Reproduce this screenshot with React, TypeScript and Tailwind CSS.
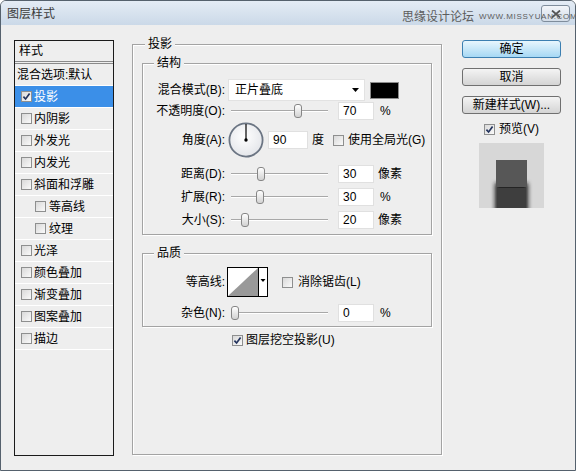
import React from "react";

type StyleItem = { label: string; checked?: boolean; active?: boolean; sub?: boolean };

const styleItems: StyleItem[] = [
  { label: "投影", checked: true, active: true },
  { label: "内阴影" },
  { label: "外发光" },
  { label: "内发光" },
  { label: "斜面和浮雕" },
  { label: "等高线", sub: true },
  { label: "纹理", sub: true },
  { label: "光泽" },
  { label: "颜色叠加" },
  { label: "渐变叠加" },
  { label: "图案叠加" },
  { label: "描边" },
];

function Check({ checked = false }: { checked?: boolean }) {
  return (
    <span className="inline-flex h-[11px] w-[11px] shrink-0 items-center justify-center border border-[#8e8f8f] bg-linear-to-br from-[#d9d9d9] to-[#fafafa]">
      {checked && (
        <svg width="9" height="9" viewBox="0 0 9 9">
          <path d="M1.4 4.6 L3.6 7 L7.6 1.6" fill="none" stroke="#24345e" strokeWidth="1.7" />
        </svg>
      )}
    </span>
  );
}

// track with a thumb; `at` is the thumb's left offset in px
function Slider({ at }: { at: number }) {
  return (
    <div className="relative ml-[6px] h-[14px] w-[97px] shrink-0">
      <div className="absolute left-0 right-0 top-[6px] h-[2px] border-t border-b border-t-[#a8a8a8] border-b-white" />
      <div
        className="absolute top-0 h-[14px] w-[8px] rounded-[3px] border border-[#868686] bg-linear-to-b from-white to-[#d2d2d2]"
        style={{ left: at }}
      />
    </div>
  );
}

function Field({ value, wide = false }: { value: string; wide?: boolean }) {
  return (
    <div
      className={`flex h-[18px] shrink-0 items-center border border-[#e0e0e0] bg-white pl-[4px] ${
        wide ? "w-[40px]" : "ml-[10px] w-[36px]"
      }`}
    >
      {value}
    </div>
  );
}

function Label({ children }: { children: React.ReactNode }) {
  return <span className="w-[82px] shrink-0 text-right">{children}</span>;
}

function Dial() {
  return (
    <svg width="36" height="36" viewBox="0 0 36 36" className="ml-[3px] shrink-0">
      <defs>
        <radialGradient id="dialFill" cx="45%" cy="40%" r="60%">
          <stop offset="0%" stopColor="#ffffff" />
          <stop offset="100%" stopColor="#e4e6ea" />
        </radialGradient>
      </defs>
      <circle cx="18" cy="18" r="16.6" fill="url(#dialFill)" stroke="#6b7583" strokeWidth="1.8" />
      <line x1="18" y1="18" x2="18" y2="2" stroke="#000" strokeWidth="1.2" />
      <circle cx="18" cy="18" r="1.7" fill="#000" />
    </svg>
  );
}

function Contour() {
  return (
    <svg width="41" height="30" viewBox="0 0 41 30" className="ml-[2px] shrink-0">
      <rect x="0.5" y="0.5" width="40" height="29" fill="#fff" stroke="#000" />
      <polygon points="1,29 31,1 31,29" fill="#999" />
      <line x1="31.5" y1="0" x2="31.5" y2="30" stroke="#000" />
      <polygon points="33.5,12 38.5,12 36,15" fill="#000" />
    </svg>
  );
}

function Button({ children, primary = false }: { children: React.ReactNode; primary?: boolean }) {
  return (
    <button
      type="button"
      className={
        primary
          ? "flex h-[18px] w-full items-center justify-center rounded-[3px] border border-[#3c7fb1] bg-linear-to-b from-[#e8f6fd] to-[#a6d8f4] leading-[14px]"
          : "flex h-[18px] w-full items-center justify-center rounded-[3px] border border-[#707070] bg-linear-to-b from-[#f4f4f4] to-[#d4d4d4] leading-[14px]"
      }
    >
      {children}
    </button>
  );
}

function Preview() {
  return (
    <svg width="65" height="65" viewBox="0 0 65 65">
      <defs>
        <filter id="soft" x="-50%" y="-50%" width="200%" height="200%">
          <feGaussianBlur stdDeviation="2.2" />
        </filter>
      </defs>
      <rect width="65" height="65" fill="#d7d7d7" />
      <rect x="16" y="40" width="33" height="40" fill="#222" filter="url(#soft)" />
      <rect x="18" y="45" width="29" height="25" fill="#3e3e3e" />
      <rect x="17" y="17" width="31" height="27" fill="#575757" />
    </svg>
  );
}

export default function App() {
  return (
    <div className="flex h-[471px] w-[576px] flex-col overflow-hidden rounded-t-[6px] border border-[#55616d] bg-[#eeeeee] font-['Liberation_Sans','Noto_Sans_CJK_SC',sans-serif] text-[12px] leading-[14px] text-black">
      {/* Title bar */}
      <div className="relative flex h-[24px] shrink-0 bg-linear-to-b from-[#e4ecf5] to-[#cbd9e8]">
        <span className="ml-[6px] mt-[6px] text-[12px] text-[#3b3b3b]">图层样式</span>
        <button
          type="button"
          className="ml-auto mr-[5px] mt-[4px] flex h-[17px] w-[29px] items-center justify-center rounded-[3px] border border-[#7f8d9c] bg-linear-to-b from-[#f2f5f9] to-[#d3dde8]"
        >
          <svg width="10" height="8" viewBox="0 0 10 8">
            <path d="M1 0.5 L9 7.5 M9 0.5 L1 7.5" stroke="#555" strokeWidth="1.8" />
          </svg>
        </button>
        {/* watermark sits over the close button */}
        <div className="absolute left-[401px] top-[9px] z-10 flex items-center gap-[5px] whitespace-nowrap text-[#5c5c5c]">
          <span className="shrink-0 text-[12px]">思缘设计论坛</span>
          <span className="shrink-0 text-[8px] leading-[10px] tracking-[0.7px]">WWW.MISSYUAN.COM</span>
        </div>
      </div>

      {/* Body */}
      <div className="flex pl-[13px]">
        {/* Styles list */}
        <div className="mt-[15px] flex h-[416px] w-[100px] shrink-0 flex-col border border-[#1a1a1a]">
          <div className="flex h-[23px] items-center border-b-[3px] border-double border-[#8a8a8a] pl-[4px]">样式</div>
          <div className="flex h-[22px] items-center border-b border-white pl-[2px]">混合选项:默认</div>
          {styleItems.map((item) => (
            <div
              key={item.label}
              className={`flex h-[22px] items-center gap-[2px] border-b border-white ${
                item.sub ? "pl-[20px] gap-[3px]" : "pl-[6px]"
              } ${item.active ? "bg-[#3b8fe8] text-white" : ""}`}
            >
              <Check checked={item.checked} />
              <span>{item.label}</span>
            </div>
          ))}
        </div>

        {/* Drop shadow settings */}
        <fieldset className="ml-[18px] mt-[12px] h-[418px] w-[310px] shrink-0 border border-[#a3a3a3] shadow-[inset_1px_1px_0_#fff,1px_1px_0_#fff]">
          <legend className="ml-[12px] bg-[#eeeeee] px-[3px]">投影</legend>

          <fieldset className="mx-[9px] mt-[5px] border border-[#a3a3a3] pb-[3px] shadow-[inset_1px_1px_0_#fff,1px_1px_0_#fff]">
            <legend className="ml-[11px] bg-[#eeeeee] px-[3px]">结构</legend>

            <div className="mt-[9px] flex h-[22px] items-center">
              <Label>混合模式(B):</Label>
              <div className="ml-[3px] flex h-[22px] w-[137px] items-center border border-[#e2e2e2] bg-white pl-[6px]">
                <span>正片叠底</span>
                <svg width="7" height="4" viewBox="0 0 7 4" className="ml-auto mr-[5px]">
                  <polygon points="0,0 7,0 3.5,4" fill="#000" />
                </svg>
              </div>
              <div className="ml-[5px] h-[17px] w-[29px] border border-[#8c8c8c] bg-black" />
            </div>

            <div className="flex h-[20px] items-center">
              <Label>不透明度(O):</Label>
              <Slider at={63} />
              <Field value="70" />
              <span className="ml-[6px]">%</span>
            </div>

            <div className="flex h-[38px] items-center">
              <Label>角度(A):</Label>
              <Dial />
              <div className="ml-[4px]">
                <Field value="90" wide />
              </div>
              <span className="ml-[4px]">度</span>
              <span className="ml-[9px] flex items-center gap-[4px]">
                <Check />
                <span>使用全局光(G)</span>
              </span>
            </div>

            <div className="mt-[4px] flex h-[22px] items-center">
              <Label>距离(D):</Label>
              <Slider at={26} />
              <Field value="30" />
              <span className="ml-[4px]">像素</span>
            </div>

            <div className="flex h-[23px] items-center">
              <Label>扩展(R):</Label>
              <Slider at={25} />
              <Field value="30" />
              <span className="ml-[6px]">%</span>
            </div>

            <div className="flex h-[23px] items-center">
              <Label>大小(S):</Label>
              <Slider at={10} />
              <Field value="20" />
              <span className="ml-[4px]">像素</span>
            </div>
          </fieldset>

          <fieldset className="mx-[9px] mt-[11px] border border-[#a3a3a3] pb-[3px] shadow-[inset_1px_1px_0_#fff,1px_1px_0_#fff]">
            <legend className="ml-[11px] bg-[#eeeeee] px-[3px]">品质</legend>

            <div className="mt-[7px] flex h-[30px] items-center">
              <Label>等高线:</Label>
              <Contour />
              <span className="ml-[14px] flex items-center gap-[5px]">
                <Check />
                <span>消除锯齿(L)</span>
              </span>
            </div>

            <div className="mt-[6px] flex h-[20px] items-center">
              <Label>杂色(N):</Label>
              <Slider at={0} />
              <Field value="0" />
              <span className="ml-[6px]">%</span>
            </div>
          </fieldset>

          <div className="ml-[99px] mt-[5px] flex h-[16px] items-center gap-[3px]">
            <Check checked />
            <span>图层挖空投影(U)</span>
          </div>
        </fieldset>

        {/* Buttons and preview */}
        <div className="ml-[20px] mt-[15px] flex w-[99px] shrink-0 flex-col items-center">
          <Button primary>确定</Button>
          <div className="mt-[10px] w-full">
            <Button>取消</Button>
          </div>
          <div className="mt-[10px] w-full">
            <Button>新建样式(W)...</Button>
          </div>
          <div className="mt-[7px] flex h-[16px] items-center gap-[4px]">
            <Check checked />
            <span>预览(V)</span>
          </div>
          <div className="mt-[6px]">
            <Preview />
          </div>
        </div>
      </div>
    </div>
  );
}
